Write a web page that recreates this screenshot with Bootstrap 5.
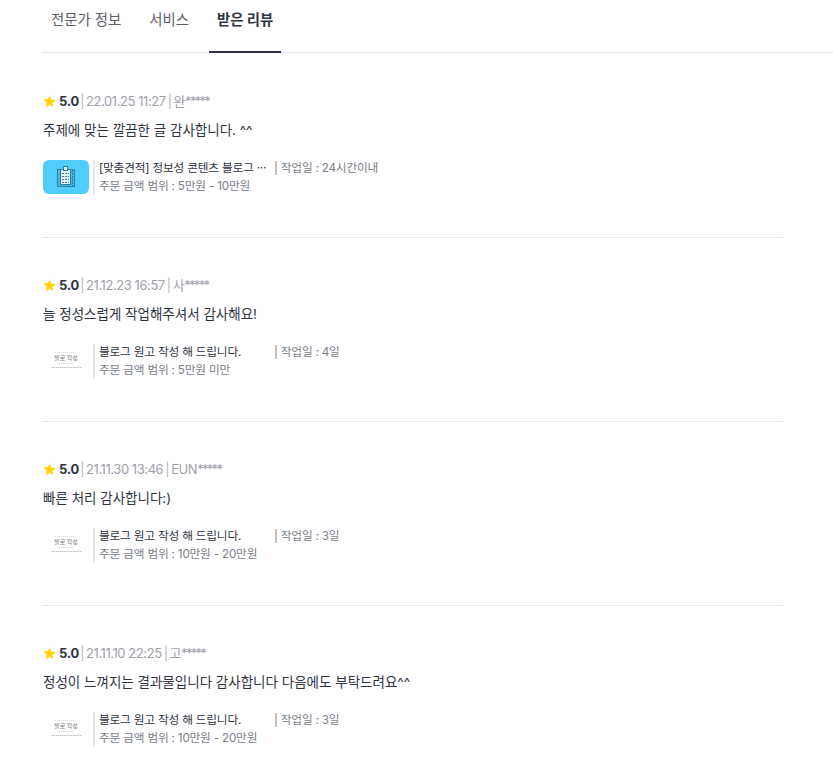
<!DOCTYPE html>
<html lang="ko">

<head>
    <meta charset="UTF-8" />
    <meta name="viewport" content="width=device-width, initial-scale=1.0" />
    <title>받은 리뷰</title>
    <link href="https://cdn.jsdelivr.net/npm/bootstrap@5.3.2/dist/css/bootstrap.min.css" rel="stylesheet" />
    <style>
        html, body {
            height: 782px;
            overflow: hidden;
        }

        body {
            background-color: #fff;
            font-family: Inter, "Noto Sans CJK KR", sans-serif;
            color: #303441;
        }

        .page-wrap {
            padding-left: 42px;
        }

        .tab-bar {
            height: 53px;
            margin-bottom: 1px;
            border-bottom: 1px solid #e4e5ed;
            gap: 12px;
        }

        .tab-item {
            padding: 10px 8px 0;
            font-size: 14.4px;
            line-height: 20px;
            color: #5d6069;
            text-decoration: none;
            margin-bottom: -1px;
        }

        .tab-item:first-child {
            padding-left: 9px;
        }

        .tab-item.on {
            color: #303441;
            font-weight: 700;
            border-bottom: 2px solid #303441;
        }

        .review-list {
            width: 741px;
        }

        .review-row {
            height: 184px;
            padding-top: 37px;
            border-bottom: 1px solid #e4e5ed;
        }

        .review-row:last-child {
            border-bottom: 0;
        }

        .review-meta {
            height: 20px;
            font-size: 13px;
            line-height: 20px;
            letter-spacing: -0.43px;
            color: #a0a1ac;
            padding-left: 1px;
        }

        .review-meta b {
            color: #303441;
            font-weight: 700;
            letter-spacing: -0.2px;
        }

        .meta-sep {
            margin: 0 2px 0 1px;
            color: #b4b5be;
        }

        .meta-sep + span + .meta-sep {
            margin: 0 2px 0 2px;
        }

        .meta-mask {
            letter-spacing: -1.7px;
        }

        .star-icon {
            width: 13px;
            height: 13px;
            margin-right: 3px;
        }

        .review-text {
            margin: 9px 0 0;
            height: 20px;
            font-size: 13.5px;
            line-height: 20px;
            padding-left: 1px;
            color: #303441;
        }

        .order-box {
            margin-top: 20px;
            height: 34px;
            padding-left: 1px;
        }

        .thumb-box {
            width: 46px;
            height: 34px;
            border-radius: 6px;
            flex-shrink: 0;
        }

        .thumb-blue {
            background-color: #4fcdfb;
        }

        .logo-text {
            font-family: "Noto Sans CJK KR", sans-serif;
            font-size: 6px;
            fill: #77787c;
            stroke: none;
        }

        .order-info {
            margin-left: 4px;
            padding-left: 4px;
            border-left: 2px solid #e4e5ed;
            font-size: 11.7px;
            line-height: 18px;
            letter-spacing: -0.2px;
            color: #7a7d89;
        }

        .order-lines {
            margin-top: -1px;
        }

        .order-title {
            width: 175px;
            color: #303441;
            white-space: nowrap;
        }
    </style>
</head>

<body>
    <div class="page-wrap">
        <!-- Tabs -->
        <div class="tab-bar d-flex">
            <a class="tab-item" href="#">전문가 정보</a>
            <a class="tab-item" href="#">서비스</a>
            <a class="tab-item on" href="#">받은 리뷰</a>
        </div>

        <!-- Reviews -->
        <div class="review-list" id="reviewList"></div>
    </div>

    <script src="https://cdn.jsdelivr.net/npm/bootstrap@5.3.2/dist/js/bootstrap.bundle.min.js"></script>
    <script>
        const reviews = [
            { date: "22.01.25 11:27", user: "완", text: "주제에 맞는 깔끔한 글 감사합니다. ^^", title: "[맞춤견적] 정보성 콘텐츠 블로그 ···", days: "24시간이내", price: "5만원 - 10만원", blue: true },
            { date: "21.12.23 16:57", user: "사", text: "늘 정성스럽게 작업해주셔서 감사해요!", title: "블로그 원고 작성 해 드립니다.", days: "4일", price: "5만원 미만" },
            { date: "21.11.30 13:46", user: "EUN", text: "빠른 처리 감사합니다:)", title: "블로그 원고 작성 해 드립니다.", days: "3일", price: "10만원 - 20만원" },
            { date: "21.11.10 22:25", user: "고", text: "정성이 느껴지는 결과물입니다 감사합니다 다음에도 부탁드려요^^", title: "블로그 원고 작성 해 드립니다.", days: "3일", price: "10만원 - 20만원" }
        ];

        const star = `<svg class="star-icon" viewBox="0 0 24 24"><path fill="#ffd400" d="M12 1.5l3.3 7 7.7 1-5.6 5.3 1.4 7.7L12 18l-6.8 3.5 1.4-7.7L1 8.5l7.7-1z"/></svg>`;

        const clipboard = `<svg width="46" height="34" viewBox="0 0 46 34" fill="none" stroke="#2b7fa3" stroke-width="1">
            <rect x="14.5" y="9.5" width="17" height="17" fill="#45b7e0"/>
            <rect x="17.5" y="9.5" width="10" height="15" fill="#e6f6fc"/>
            <rect x="20.5" y="6.5" width="4" height="4" fill="#e6f6fc"/>
            <path d="M19 13.5h7M19 16.5h7M19 19.5h7M19 22.5h7" stroke-dasharray="2 1"/>
            <path d="M29.5 10v16" stroke-dasharray="2 1"/>
        </svg>`;

        const logo = `<svg width="46" height="34" viewBox="0 0 46 34" fill="none" stroke="#a5a6aa" stroke-width="0.7">
            <path d="M12 8.5h22" stroke-dasharray="1.2 .8" stroke="#c4c5c9"/>
            <text class="logo-text" x="23" y="16" text-anchor="middle">블로 작성</text>
            <path d="M14 19.5h17" stroke-dasharray="1.2 .8" stroke="#c4c5c9"/>
            <path d="M8 23.5h31" stroke-dasharray="1.6 .6" stroke="#a5a6aa"/>
        </svg>`;

        document.getElementById("reviewList").innerHTML = reviews.map(r => `
            <div class="review-row">
                <div class="review-meta d-flex align-items-center">
                    ${star}<b>5.0</b><span class="meta-sep">|</span><span>${r.date}</span><span class="meta-sep">|</span><span>${r.user}<span class="meta-mask">*****</span></span>
                </div>
                <p class="review-text">${r.text}</p>
                <div class="order-box d-flex">
                    <div class="thumb-box ${r.blue ? "thumb-blue" : ""}">${r.blue ? clipboard : logo}</div>
                    <div class="order-info">
                        <div class="order-lines">
                            <div class="d-flex">
                                <span class="order-title">${r.title}</span>
                                <span>| 작업일 : ${r.days}</span>
                            </div>
                            <div>주문 금액 범위 : ${r.price}</div>
                        </div>
                    </div>
                </div>
            </div>
        `).join("");
    </script>
</body>

</html>
